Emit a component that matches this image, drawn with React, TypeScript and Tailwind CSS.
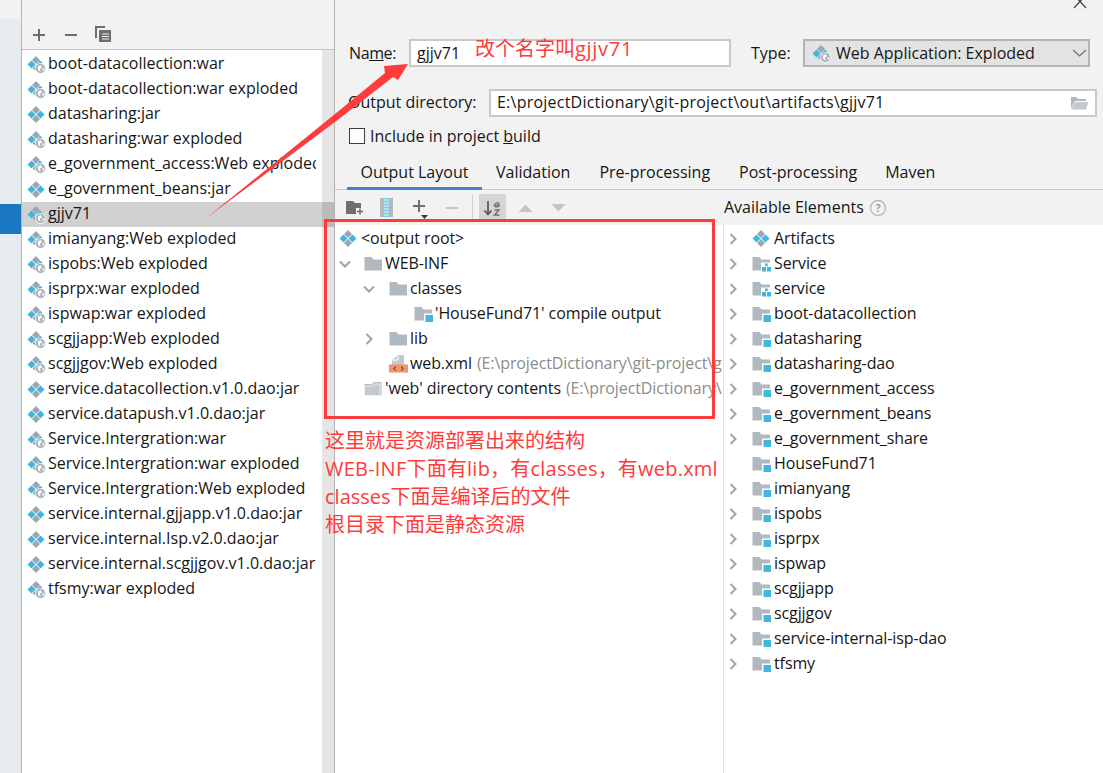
import React from "react";

const BLUE = "#40b6e0";
const GRAY = "#9aa7b0";

function Diamonds({ web = false, className = "" }: { web?: boolean; className?: string }) {
  return (
    <svg width="19" height="19" viewBox="0 0 19 19" className={`shrink-0 ${className}`}>
      <path d="M9 1 L13 5 L9 9 L5 5 Z" fill={GRAY} />
      <path d="M4.5 5.5 L8.5 9.5 L4.5 13.5 L0.5 9.5 Z" fill={BLUE} />
      {!web && <path d="M13.5 5.5 L17.5 9.5 L13.5 13.5 L9.5 9.5 Z" fill={BLUE} />}
      {!web && <path d="M9 10 L13 14 L9 18 L5 14 Z" fill={GRAY} />}
      {web && <path d="M9 10 L11 12 L9 16 L5.5 13.5 Z" fill={GRAY} />}
      {web && <path d="M13 5.5 L15.5 8 L11 10.5 L9.5 9.5 Z" fill={BLUE} />}
      {web && (
        <g>
          <circle cx="13.5" cy="13.5" r="5.4" fill="#ffffff" />
          <circle cx="13.5" cy="13.5" r="4.7" fill="#a9b4bb" />
          <path d="M10.8 11.5 L14 10 L15 12.5 L13 13.5 L13.5 17 L11.2 15 Z" fill="#ffffff" />
          <path d="M15.5 13.5 L17.5 13 L16.8 15.5 L15.5 15.7 Z" fill="#ffffff" />
        </g>
      )}
    </svg>
  );
}

function Folder({ badge }: { badge?: "module" | "grid" }) {
  return (
    <svg width="19" height="16" viewBox="0 0 19 16" className="shrink-0">
      <path d="M0.5 1 H7.5 L9.5 3.5 H18 V14.5 H0.5 Z" fill="#b0b9bf" />
      {badge === "module" && (
        <g>
          <rect x="10" y="7.5" width="9" height="8.5" fill="#ffffff" />
          <rect x="11.5" y="9" width="7.5" height="7" fill={BLUE} />
        </g>
      )}
      {badge === "grid" && (
        <g>
          <rect x="9" y="6.5" width="10" height="9.5" fill="#ffffff" />
          <rect x="13" y="7.5" width="2.7" height="2.7" fill={BLUE} />
          <rect x="10" y="11" width="4" height="4.5" fill={BLUE} />
          <rect x="15" y="11" width="4" height="4.5" fill={BLUE} />
        </g>
      )}
    </svg>
  );
}

function OpenFolder() {
  return (
    <svg width="19" height="16" viewBox="0 0 19 16" className="shrink-0">
      <path d="M0.5 3 H8 L10 1 H17.5 V14.5 H0.5 Z" fill="#b7bfc5" />
      <path d="M0.5 5 H8 L10 3 H16 V14.5 H0.5 Z" fill="#c3cace" stroke="#ffffff" strokeWidth="0.7" />
    </svg>
  );
}

function XmlFile() {
  return (
    <svg width="20" height="19" viewBox="0 0 20 19" className="shrink-0">
      <path d="M3 1 H15 V11 H3 Z" fill="#c3cace" />
      <path d="M3 1 H9 L3 6 Z" fill="#ffffff" />
      <path d="M9 1.5 V6 H3.5" fill="none" stroke="#ffffff" strokeWidth="1" />
      <rect x="0" y="10.5" width="19" height="8" fill="#f0946d" />
      <path d="M7 12.5 L4.5 14.5 L7 16.5 M12 12.5 L14.5 14.5 L12 16.5" fill="none" stroke="#3b3b3b" strokeWidth="1" />
    </svg>
  );
}

function Chevron({ open = false }: { open?: boolean }) {
  return (
    <svg width="12" height="12" viewBox="0 0 12 12" className="shrink-0">
      <path
        d={open ? "M1 3.5 L6 8.5 L11 3.5" : "M3.5 1 L8.5 6 L3.5 11"}
        fill="none"
        stroke="#a0a4a7"
        strokeWidth="2"
      />
    </svg>
  );
}

const artifacts: [string, boolean][] = [
  ["boot-datacollection:war", true],
  ["boot-datacollection:war exploded", true],
  ["datasharing:jar", false],
  ["datasharing:war exploded", true],
  ["e_government_access:Web exploded", true],
  ["e_government_beans:jar", false],
  ["gjjv71", true],
  ["imianyang:Web exploded", true],
  ["ispobs:Web exploded", true],
  ["isprpx:war exploded", true],
  ["ispwap:war exploded", true],
  ["scgjjapp:Web exploded", true],
  ["scgjjgov:Web exploded", true],
  ["service.datacollection.v1.0.dao:jar", false],
  ["service.datapush.v1.0.dao:jar", false],
  ["Service.Intergration:war", true],
  ["Service.Intergration:war exploded", true],
  ["Service.Intergration:Web exploded", true],
  ["service.internal.gjjapp.v1.0.dao:jar", false],
  ["service.internal.Isp.v2.0.dao:jar", false],
  ["service.internal.scgjjgov.v1.0.dao:jar", false],
  ["tfsmy:war exploded", true],
];

const elements: [string, "art" | "grid" | "module"][] = [
  ["Artifacts", "art"],
  ["Service", "grid"],
  ["service", "grid"],
  ["boot-datacollection", "module"],
  ["datasharing", "module"],
  ["datasharing-dao", "module"],
  ["e_government_access", "module"],
  ["e_government_beans", "module"],
  ["e_government_share", "module"],
  ["HouseFund71", "module"],
  ["imianyang", "module"],
  ["ispobs", "module"],
  ["isprpx", "module"],
  ["ispwap", "module"],
  ["scgjjapp", "module"],
  ["scgjjgov", "module"],
  ["service-internal-isp-dao", "module"],
  ["tfsmy", "module"],
];

const Tab = ({ label, active, className }: { label: string; active?: boolean; className: string }) => (
  <div
    className={`flex h-[30px] items-center justify-center border-b-[3px] pb-[4px] ${
      active ? "border-[#4083c9]" : "border-transparent"
    } ${className}`}
  >
    {label}
  </div>
);

export default function App() {
  return (
    <div className="relative flex h-[773px] w-[1103px] overflow-hidden bg-[#f2f2f2] font-['Open_Sans','Noto_Sans_CJK_SC',sans-serif] text-[16px] text-[#161616]">
      {/* far-left nav */}
      <div className="w-[21px] shrink-0 pt-[19px]">
        <div className="h-full bg-[#e6ebf0] pt-[185px]">
          <div className="h-[30px] bg-[#1a78c2]" />
        </div>
      </div>

      {/* artifact list */}
      <div className="w-[314px] shrink-0 border-x border-[#b4b4b4] pt-[19px]">
        <div className="flex h-[31px] items-center border-b border-[#c4c4c4] pl-[10px] pt-[1px]">
          <svg width="14" height="14" viewBox="0 0 14 14" className="mr-[18px]">
            <path d="M7 1 V13 M1 7 H13" stroke="#6e6e6e" strokeWidth="2" />
          </svg>
          <svg width="14" height="14" viewBox="0 0 14 14" className="mr-[17px]">
            <path d="M1 7 H13" stroke="#6e6e6e" strokeWidth="2" />
          </svg>
          <svg width="17" height="17" viewBox="0 0 17 17">
            <path d="M1 12 V1 H10" fill="none" stroke="#6e6e6e" strokeWidth="2" />
            <rect x="4" y="4" width="12" height="12" fill="#6e6e6e" />
            <path d="M7 8 H14 M7 10.5 H14 M7 13 H14" stroke="#f2f2f2" strokeWidth="1" />
          </svg>
        </div>
        <div className="relative h-[723px] bg-white pt-[2px]">
          {artifacts.map(([name, web]) => (
            <div
              key={name}
              className={`flex h-[25px] items-center pl-[5px] ${name === "gjjv71" ? "bg-[#d1d1d1]" : ""}`}
            >
              <Diamonds web={web} className="mr-[2px]" />
              <span className="w-[268px] overflow-hidden whitespace-nowrap pb-[4px]">{name}</span>
            </div>
          ))}
          <div className="absolute bottom-0 right-0 top-0 w-[12px] bg-black/10" />
        </div>
      </div>

      {/* editor */}
      <div className="flex min-w-0 flex-1 flex-col pt-[39px]">
        <div className="flex h-[28px] items-center pl-[14px]">
          <span className="w-[60px] tracking-[-0.4px]">
            Na<span className="underline">m</span>e:
          </span>
          <div className="flex h-[28px] w-[322px] items-center border-2 border-[#c9c9c9] bg-white pl-[6px]">gjjv71</div>
          <span className="ml-[20px] w-[52px]">Type:</span>
          <div className="flex h-[28px] w-[287px] items-center border-2 border-[#b4b4b4] bg-[#e3e3e3] pl-[7px]">
            <Diamonds web className="mr-[5px]" />
            <span className="flex-1">Web Application: Exploded</span>
            <svg width="15" height="8" viewBox="0 0 15 8" className="mr-px">
              <path d="M1 1 L7.5 7 L14 1" fill="none" stroke="#6e6e6e" strokeWidth="1.2" />
            </svg>
          </div>
        </div>
        <div className="mt-[22px] flex h-[28px] items-center pl-[13px]">
          <span className="w-[141px] pb-[2px]">Output directory:</span>
          <div className="flex h-[28px] w-[608px] items-center border-2 border-[#c9c9c9] bg-white pl-[6px]">
            <span className="flex-1 pb-[2px] tracking-[0.23px]">E:\projectDictionary\git-project\out\artifacts\gjjv71</span>
            <svg width="19" height="14" viewBox="0 0 19 14" className="mr-[6px]">
              <path d="M1 13 V1 H6 L8 3 H16 V5 H5 Z" fill="#b0b9bf" />
              <path d="M5 6 H18.5 L16 13.5 H1.5 Z" fill="#c3cace" />
            </svg>
          </div>
        </div>
        <div className="mt-[11px] flex h-[16px] items-center pl-[14px]">
          <div className="mr-[5px] h-[16px] w-[16px] shrink-0 border border-[#3c3c3c] bg-white" />
          <span>
            Include in project <span className="underline">b</span>uild
          </span>
        </div>
        <div className="mt-[16px] flex h-[30px] border-b border-[#c9c9c9] pl-[12px]">
          <Tab label="Output Layout" active className="w-[135px]" />
          <Tab label="Validation" className="ml-[14px]" />
          <Tab label="Pre-processing" className="ml-[29px]" />
          <Tab label="Post-processing" className="ml-[29px]" />
          <Tab label="Maven" className="ml-[28px]" />
        </div>

        <div className="flex h-[35px] items-center">
          <div className="flex w-[389px] items-center pl-[11px]">
            <svg width="18" height="15" viewBox="0 0 18 15" className="mr-[16px]">
              <path d="M0 1 H7 L9 3 H15 V8 H10 V14 H0 Z" fill="#6e6e6e" />
              <path d="M14 8.5 V14.5 M11 11.5 H17" stroke="#6e6e6e" strokeWidth="1.6" />
            </svg>
            <svg width="13" height="19" viewBox="0 0 13 19" className="mr-[19px]">
              <rect x="0" y="0" width="13" height="19" fill="#b0b9bf" />
              <rect x="4" y="0" width="5" height="19" fill="#7fcbe8" />
              <path d="M4 2 H9 M4 5 H9 M4 8 H9 M4 11 H9 M4 14 H9 M4 17 H9" stroke="#f2f2f2" strokeWidth="1" />
            </svg>
            <svg width="20" height="22" viewBox="0 0 20 22" className="mr-[13px] mt-[2px]">
              <path d="M7 2 V14 M1 8 H13" stroke="#6e6e6e" strokeWidth="2" />
              <path d="M9 17 H16 L12.5 21 Z" fill="#3c3c3c" />
            </svg>
            <svg width="14" height="4" viewBox="0 0 14 4" className="mr-[13px]">
              <path d="M1 2 H13" stroke="#c4c4c4" strokeWidth="2" />
            </svg>
            <div className="mr-[6px] h-[26px] w-px bg-[#d0d0d0]" />
            <div className="mr-[12px] flex h-[27px] w-[27px] items-center justify-center bg-[#d5d5d5]">
              <svg width="20" height="18" viewBox="0 0 20 18">
                <path d="M5 2 V15 M1.5 11.5 L5 15.5 L8.5 11.5" fill="none" stroke="#5c5c5c" strokeWidth="1.8" />
                <path d="M11 7 C12 3 16 3 16 5 V8 M15.5 6 C12 5.5 11.5 8 13 8 C14.5 8 15.5 7 15.5 6" fill="none" stroke="#6e6e6e" strokeWidth="1.2" />
                <path d="M11.5 11 H16 L11.5 16 H16.5" fill="none" stroke="#6e6e6e" strokeWidth="1.4" />
              </svg>
            </div>
            <svg width="15" height="8" viewBox="0 0 15 8" className="mr-[18px]">
              <path d="M0.5 8 L7.5 0.5 L14.5 8 Z" fill="#c4c4c4" />
            </svg>
            <svg width="15" height="8" viewBox="0 0 15 8">
              <path d="M0.5 0 L7.5 7.5 L14.5 0 Z" fill="#c4c4c4" />
            </svg>
          </div>
          <div className="flex items-center">
            <span className="pb-[2px]">Available Elements</span>
            <svg width="18" height="18" viewBox="0 0 18 18" className="ml-[5px]">
              <circle cx="9" cy="9" r="7.5" fill="none" stroke="#b4b9bd" strokeWidth="1.3" />
              <text x="9" y="13" textAnchor="middle" fontSize="11" fill="#9aa0a4" fontWeight="700">?</text>
            </svg>
          </div>
        </div>

        <div className="flex min-h-0 flex-1 bg-white tracking-[-0.1px]">
          <div className="w-[388px] shrink-0 overflow-hidden whitespace-nowrap pt-px">
            <div className="flex h-[25px] items-center pl-[4px]">
              <Diamonds className="mr-[3px]" />
              <span className="pb-[2px]">&lt;output root&gt;</span>
            </div>
            <div className="flex h-[25px] items-center pl-[4px]">
              <Chevron open />
              <div className="w-[13px]" />
              <Folder />
              <span className="ml-[2px] pb-[2px]">WEB-INF</span>
            </div>
            <div className="flex h-[25px] items-center pl-[28px]">
              <Chevron open />
              <div className="w-[14px]" />
              <Folder />
              <span className="ml-[2px] pb-[2px]">classes</span>
            </div>
            <div className="flex h-[25px] items-center pl-[79px]">
              <Folder badge="module" />
              <span className="ml-[2px] pb-[2px]">'HouseFund71' compile output</span>
            </div>
            <div className="flex h-[25px] items-center pl-[28px]">
              <Chevron />
              <div className="w-[14px]" />
              <Folder />
              <span className="ml-[2px] pb-[2px]">lib</span>
            </div>
            <div className="flex h-[25px] items-center pl-[54px]">
              <XmlFile />
              <span className="ml-px pb-[2px]">web.xml</span>
              <span className="ml-[5px] pb-[2px] text-[#8c8c8c]">(E:\projectDictionary\git-project\g</span>
            </div>
            <div className="flex h-[25px] items-center pl-[29px]">
              <OpenFolder />
              <span className="ml-[2px] pb-[2px]">'web' directory contents</span>
              <span className="ml-[5px] pb-[2px] text-[#8c8c8c]">(E:\projectDictionary\</span>
            </div>
          </div>
          <div className="w-px shrink-0 bg-[#e2e2e2]" />
          <div className="flex-1 pt-px">
            {elements.map(([name, kind]) => (
              <div key={name} className="flex h-[25px] items-center pl-[3px]">
                <div className={name === "HouseFund71" ? "invisible" : ""}>
                  <Chevron />
                </div>
                <div className="w-[13px]" />
                {kind === "art" ? <Diamonds /> : <Folder badge={kind} />}
                <span className="ml-[3px] pb-[2px]">{name}</span>
              </div>
            ))}
          </div>
        </div>
      </div>

      {/* window close, clipped by the top edge */}
      <svg width="16" height="10" viewBox="0 0 16 10" className="absolute left-[1072px] top-0">
        <path d="M2 -5 L14 8 M14 -5 L2 8" stroke="#3c3c3c" strokeWidth="1.2" fill="none" />
      </svg>

      {/* red annotations */}
      <svg width="1103" height="773" viewBox="0 0 1103 773" className="pointer-events-none absolute left-0 top-0">
        <path d="M205 219 L335 114 L385 73 L384 66 L408 64 L398 80 L393 77 L335 122 Z" fill="#ff3b3b" />
      </svg>
      <div className="pointer-events-none absolute left-[324px] top-[219px] h-[200px] w-[391px] border-[3px] border-[#ff3b3b]" />
      <div className="absolute left-[475px] top-[34px] text-[20px] leading-[30px] text-[#ff3b3b]">
        改个名字叫<span className="tracking-[0.7px]">gjjv71</span>
      </div>
      <div className="absolute left-[325px] top-[427px] whitespace-nowrap text-[20px] leading-[28px] text-[#ff3b3b]">
        <div>这里就是资源部署出来的结构</div>
        <div className="tracking-[0.22px]">WEB-INF下面有lib，有classes，有web.xml</div>
        <div>classes下面是编译后的文件</div>
        <div>根目录下面是静态资源</div>
      </div>
    </div>
  );
}
